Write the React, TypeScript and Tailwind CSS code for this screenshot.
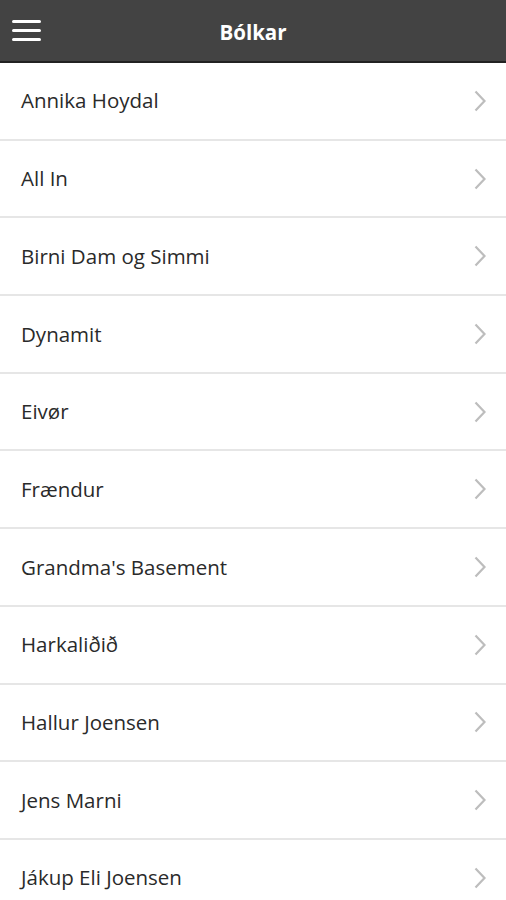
const BANDS = [
  "Annika Hoydal",
  "All In",
  "Birni Dam og Simmi",
  "Dynamit",
  "Eivør",
  "Frændur",
  "Grandma's Basement",
  "Harkaliðið",
  "Hallur Joensen",
  "Jens Marni",
  "Jákup Eli Joensen",
];

function Chevron() {
  return (
    <svg width="12" height="22" viewBox="0 0 12 22" fill="none">
      <polyline
        points="1.5,1.5 10.5,11 1.5,20.5"
        stroke="#bdbdbd"
        strokeWidth="2.2"
        strokeLinejoin="miter"
      />
    </svg>
  );
}

export default function App() {
  return (
    <div
      className="w-[506px] h-[900px] overflow-hidden bg-white"
      style={{ fontFamily: '"Open Sans", "Noto Sans", sans-serif' }}
    >
      <header className="h-[63px] bg-[#434343] border-b-2 border-[#222] flex items-center pt-[3px] relative">
        <button className="absolute left-[12px] top-[20px] w-[29px] flex flex-col gap-[6px]">
          <span className="h-[3px] bg-white rounded-sm" />
          <span className="h-[3px] bg-white rounded-sm" />
          <span className="h-[3px] bg-white rounded-sm" />
        </button>
        <h1 className="flex-1 text-center text-white font-bold text-[20.5px]">Bólkar</h1>
      </header>
      <ul>
        {BANDS.map((b) => (
          <li
            key={b}
            className="h-[77.7px] flex items-center justify-between pl-[21px] pr-[20px] border-b-2 border-[#e6e6e6]"
          >
            <span className="text-[20.5px] text-[#2a2a2a]">{b}</span>
            <Chevron />
          </li>
        ))}
      </ul>
    </div>
  );
}
